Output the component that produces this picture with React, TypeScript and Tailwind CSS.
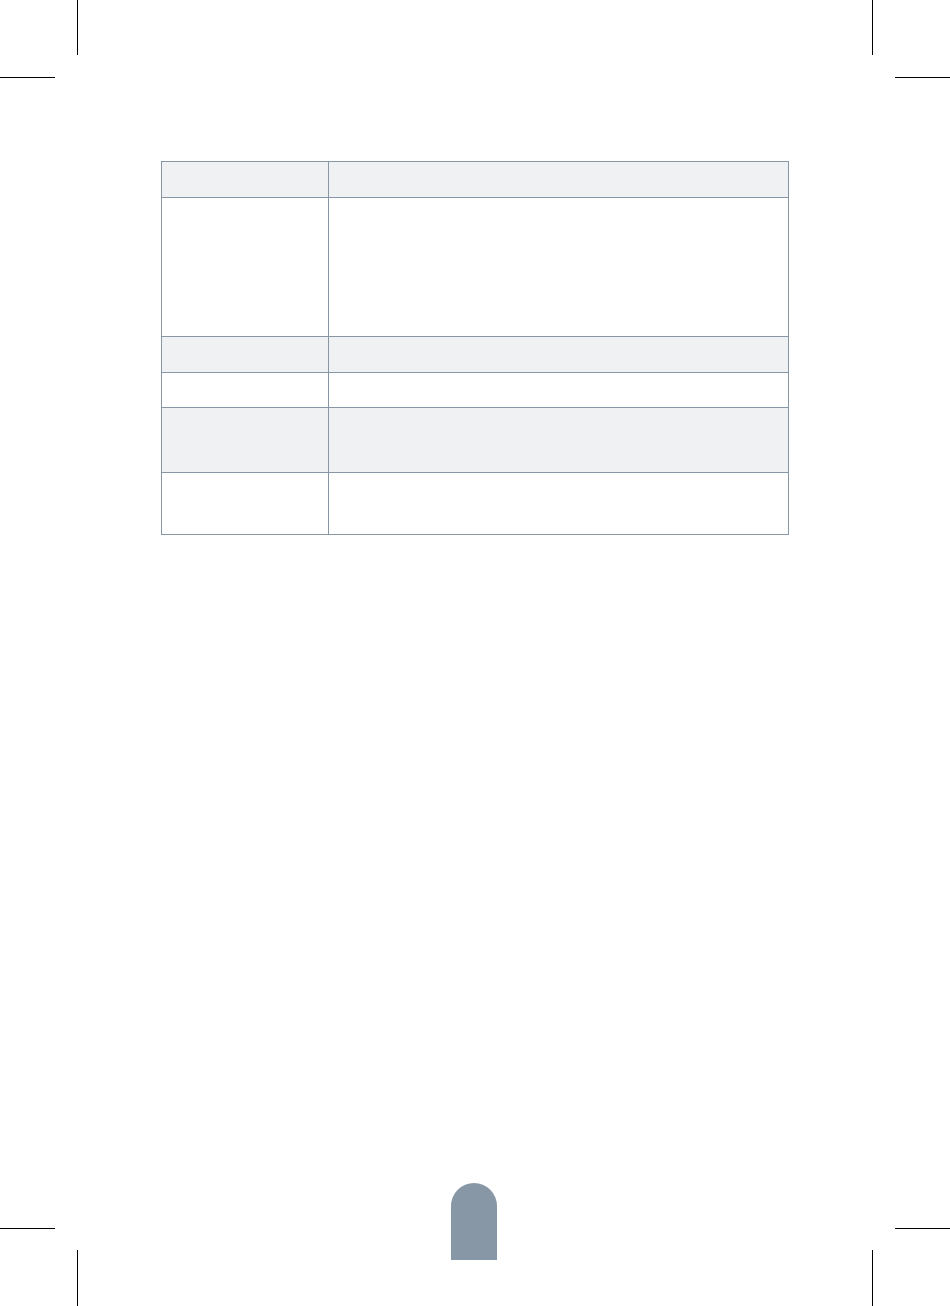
import React from "react";

const rows = [
  { h: "h-[35px]", shaded: true },
  { h: "h-[138px]", shaded: false },
  { h: "h-[35px]", shaded: true },
  { h: "h-[34px]", shaded: false },
  { h: "h-[64px]", shaded: true },
  { h: "h-[61px]", shaded: false },
];

const CropMarks = () => (
  <>
    {/* top left */}
    <div className="absolute left-[77px] top-0 w-px h-[55px] bg-black" />
    <div className="absolute left-0 top-[77px] w-[55px] h-px bg-black" />
    {/* top right */}
    <div className="absolute left-[872px] top-0 w-px h-[55px] bg-black" />
    <div className="absolute left-[895px] top-[77px] w-[55px] h-px bg-black" />
    {/* bottom left */}
    <div className="absolute left-0 top-[1228px] w-[55px] h-px bg-black" />
    <div className="absolute left-[77px] top-[1250px] w-px h-[56px] bg-black" />
    {/* bottom right */}
    <div className="absolute left-[895px] top-[1228px] w-[55px] h-px bg-black" />
    <div className="absolute left-[872px] top-[1250px] w-px h-[56px] bg-black" />
  </>
);

export default function App() {
  return (
    <div className="relative w-[950px] h-[1306px] bg-white overflow-hidden font-['Liberation_Sans',sans-serif]">
      <CropMarks />
      <div className="pt-[161px] pl-[161px]">
        <div className="w-[628px] border border-[#8797a6] flex flex-col">
          {rows.map((row, i) => (
            <div
              key={i}
              className={`flex ${i > 0 ? "border-t border-[#8797a6]" : ""} ${row.shaded ? "bg-[#f0f1f3]" : "bg-white"}`}
            >
              <div className={`w-[166px] ${row.h}`} />
              <div className={`flex-1 border-l border-[#8797a6] ${row.h}`} />
            </div>
          ))}
        </div>
      </div>
      <div className="mt-[648px] ml-[451px] w-[46px] h-[77px] rounded-t-full bg-[#8797a5]" />
    </div>
  );
}
